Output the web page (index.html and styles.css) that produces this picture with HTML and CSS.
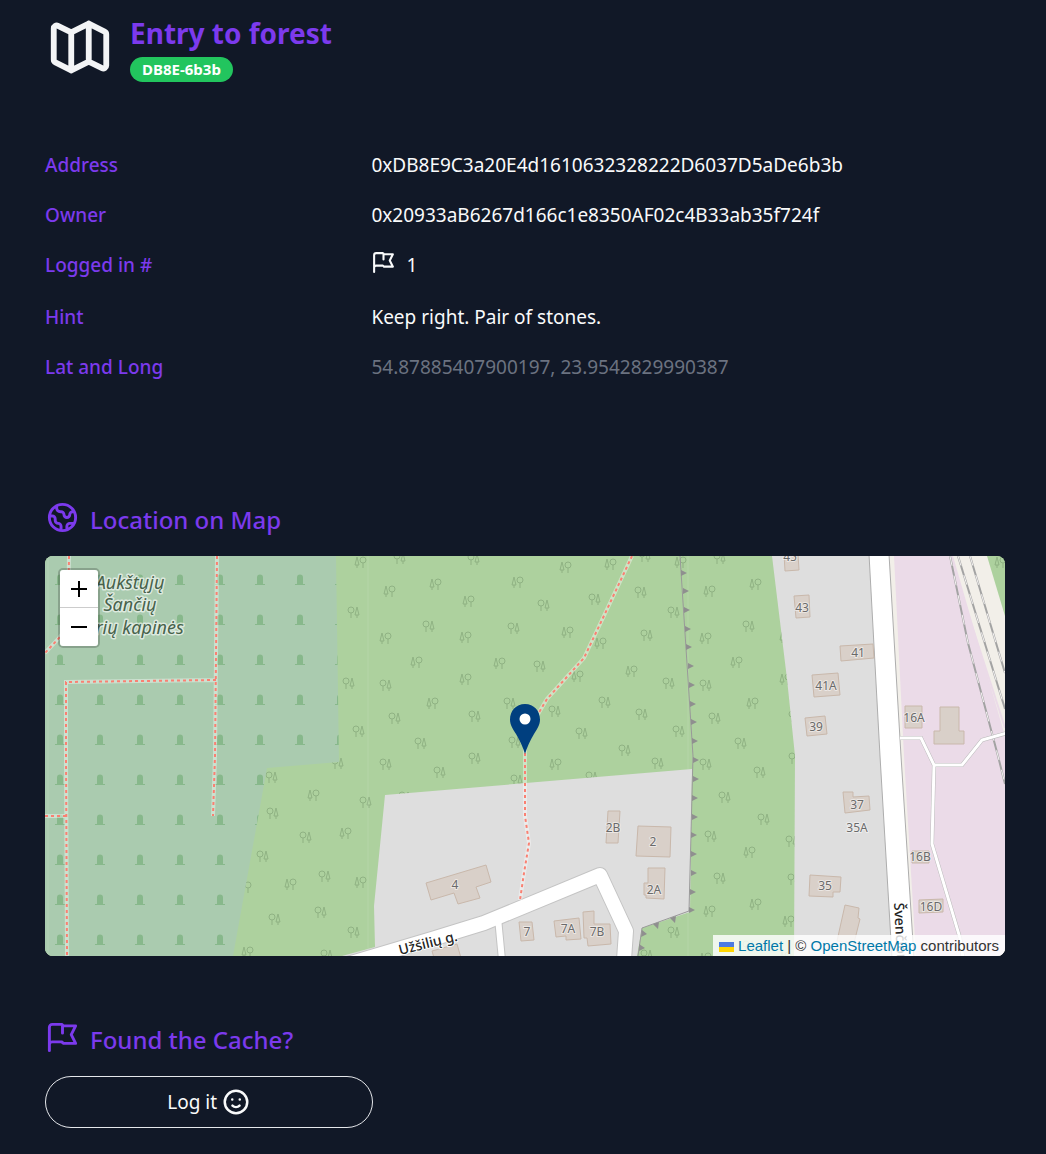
FILE: index.html
```html
<!DOCTYPE html>
<html lang="en">
<head>
<meta charset="utf-8">
<meta name="viewport" content="width=device-width, initial-scale=1">
<title>Entry to forest</title>
<link rel="stylesheet" href="styles.css">
</head>
<body>
<main class="page">
  <header class="cache-header">
    <svg class="icon icon-xl" viewBox="0 0 24 24" aria-hidden="true"><path d="M9 20l-5.447-2.724A1 1 0 013 16.382V5.618a1 1 0 011.447-.894L9 7m0 13l6-3m-6 3V7m6 10l4.553 2.276A1 1 0 0021 18.382V7.618a1 1 0 00-.553-.894L15 4m0 13V4m0 0L9 7"/></svg>
    <div class="cache-name">
      <h1>Entry to forest</h1>
      <span class="badge">DB8E-6b3b</span>
    </div>
  </header>

  <dl class="details">
    <div class="row"><dt>Address</dt><dd>0xDB8E9C3a20E4d1610632328222D6037D5aDe6b3b</dd></div>
    <div class="row"><dt>Owner</dt><dd>0x20933aB6267d166c1e8350AF02c4B33ab35f724f</dd></div>
    <div class="row row-logs"><dt>Logged in #</dt><dd><svg class="icon icon-sm" viewBox="0 0 24 24" aria-hidden="true"><path d="M3 21v-4m0 0V5a2 2 0 012-2h6.5l1 1H21l-3 6 3 6h-8.500l-1-1H5a2 2 0 00-2 2zm9-13.500V9"/></svg><span>1</span></dd></div>
    <div class="row"><dt>Hint</dt><dd>Keep right. Pair of stones.</dd></div>
    <div class="row"><dt>Lat and Long</dt><dd class="muted">54.87885407900197, 23.9542829990387</dd></div>
  </dl>

  <section class="location">
    <h2><svg class="icon icon-lg" viewBox="0 0 24 24" aria-hidden="true"><path d="M3.055 11H5a2 2 0 012 2v1a2 2 0 002 2 2 2 0 012 2v2.945M8 3.935V5.500A2.500 2.500 0 0010.500 8h.5a2 2 0 012 2 2 2 0 104 0 2 2 0 012-2h1.064M15 20.488V18a2 2 0 012-2h3.064M21 12a9 9 0 11-18 0 9 9 0 0118 0z"/></svg>Location on Map</h2>
    <div class="map">
      <svg class="map-canvas" viewBox="0 0 960 400" preserveAspectRatio="xMidYMid slice" role="img" aria-label="Map of the cache surroundings">
        <defs>
          <g id="pine"><path d="M-3 -5L-5 3H-1ZM-3 3V6"/><circle cx="3" cy="-2" r="3"/><path d="M3 1V6"/></g>
          <g id="oak"><circle cx="-3" cy="-2" r="3"/><path d="M-3 1V6M3 -5L1 3H5ZM3 3V6"/></g>
          <pattern id="wood" width="320" height="320" patternUnits="userSpaceOnUse">
            <rect width="320" height="320" fill="#add19e"/>
            <g class="tree">
              <use href="#pine" x="200" y="11"/><use href="#pine" x="245" y="8"/><use href="#pine" x="24" y="35"/><use href="#pine" x="70" y="28"/><use href="#pine" x="152" y="26"/><use href="#pine" x="103" y="45"/><use href="#pine" x="202" y="76"/><use href="#pine" x="20" y="82"/><use href="#pine" x="100" y="81"/><use href="#pine" x="235" y="87"/><use href="#pine" x="51" y="106"/><use href="#pine" x="134" y="107"/><use href="#pine" x="212" y="120"/><use href="#pine" x="266" y="115"/><use href="#pine" x="100" y="123"/><use href="#pine" x="67" y="147"/><use href="#pine" x="190" y="208"/><use href="#pine" x="268" y="239"/><use href="#pine" x="300" y="277"/><use href="#pine" x="315" y="6"/><use href="#pine" x="-5" y="6"/>
              <use href="#oak" x="35" y="2"/><use href="#oak" x="35" y="322"/><use href="#oak" x="109" y="3"/><use href="#oak" x="109" y="323"/><use href="#oak" x="280" y="0"/><use href="#oak" x="280" y="320"/><use href="#oak" x="179" y="49"/><use href="#oak" x="230" y="43"/><use href="#oak" x="276" y="36"/><use href="#oak" x="309" y="56"/><use href="#oak" x="64" y="70"/><use href="#oak" x="149" y="72"/><use href="#oak" x="282" y="79"/><use href="#oak" x="175" y="110"/><use href="#oak" x="21" y="129"/><use href="#oak" x="304" y="127"/><use href="#oak" x="145" y="147"/><use href="#oak" x="190" y="155"/><use href="#oak" x="240" y="146"/><use href="#oak" x="30" y="162"/><use href="#oak" x="110" y="160"/><use href="#oak" x="277" y="158"/><use href="#oak" x="56" y="187"/><use href="#oak" x="150" y="186"/><use href="#oak" x="217" y="177"/><use href="#oak" x="314" y="175"/><use href="#oak" x="260" y="194"/><use href="#oak" x="110" y="202"/><use href="#oak" x="21" y="208"/><use href="#oak" x="75" y="216"/><use href="#oak" x="293" y="207"/><use href="#oak" x="152" y="224"/><use href="#oak" x="227" y="221"/><use href="#oak" x="40" y="241"/><use href="#oak" x="228" y="257"/><use href="#oak" x="79" y="263"/><use href="#oak" x="1" y="246"/><use href="#oak" x="321" y="246"/><use href="#oak" x="26" y="280"/><use href="#oak" x="261" y="281"/><use href="#oak" x="107" y="285"/><use href="#oak" x="218" y="300"/><use href="#pine" x="64" y="296"/>
            </g>
          </pattern>
          <pattern id="graves" width="40" height="40" patternUnits="userSpaceOnUse">
            <rect width="40" height="40" fill="#aacbaf"/>
            <path fill="#87b88b" d="M12 28V21.500a3 3 0 016 0V28h2v1H10v-1z"/>
          </pattern>
        </defs>

        <rect width="960" height="400" fill="url(#wood)"/>
        <path fill="url(#graves)" d="M0 0H291L294 206L222 212L188 400H0Z"/>
        <path stroke="#fff" stroke-opacity=".12" d="M3 0V400M323 0V400M643 0V400"/>

        <g fill="#dedede">
          <path d="M340 239L647 213L645 356L597 372L592 400H297L330 391L329 350Z"/>
          <path d="M727 0L742 123L750 200L749 400H860L836 0Z"/>
        </g>
        <path fill="#f2efe9" d="M842 0H942L960 60V400H866Z"/>
        <path fill="#ebdbe8" d="M849 0H908L960 180V400H871L859 200Z"/>
        <path class="thin-strip" d="M911 20L960 172"/>

        <g class="fence">
          <path fill="none" d="M635 0L648 200L644 355L597 372L593 400"/>
          <path class="spikes" d="M636 14l6 3l-6 3zM638 32l6 3l-6 3zM639 51l6 3l-6 3zM640 70l6 3l-6 3zM641 88l6 3l-6 3zM643 107l6 3l-6 3zM644 126l6 3l-6 3zM645 145l6 3l-6 3zM646 163l6 3l-6 3zM647 182l6 3l-6 3zM648 201l6 3l-6 3zM648 220l6 3l-6 3zM647 239l6 3l-6 3zM647 258l6 3l-6 3zM646 276l6 3l-6 3zM646 295l6 3l-6 3zM646 314l6 3l-6 3zM645 333l6 3l-6 3zM644 351l6 3l-6 3zM625 362l5 5l1-7zM608 368l5 5l1-7zM597 374l5 4l-6 3zM594 388l6 4l-6 3z"/>
        </g>

        <g class="rail">
          <path d="M905 0L923 87L953 200L960 228"/><path d="M913 0L960 153"/><path d="M925 0L960 117"/>
        </g>
        <g class="rail-gap">
          <path d="M905 0L923 87L953 200L960 228"/><path d="M913 0L960 153"/><path d="M925 0L960 117"/>
        </g>

        <path class="street-edge" d="M824 -2L835 200L847 402H869L856 200L844 -2Z"/>

        <g class="lane-edge"><path d="M855 182H876L889 209H917L937 184L962 177M889 209L887 288L915 382L918 402"/></g>
        <g class="lane"><path d="M855 182H876L889 209H917L937 184L962 177M889 209L887 288L915 382L918 402"/></g>

        <g class="road-edge">
          <path stroke-width="16" d="M296 410L387 383L439 367L555 319L581 375L579 404"/>
          <path stroke-width="8" d="M453 362L457 404"/>
        </g>
        <g class="road">
          <path stroke-width="14" d="M296 410L387 383L439 367L555 319L581 375L579 404"/>
          <path stroke-width="6" d="M453 362L457 404"/>
        </g>

        <g class="trail-bed">
          <path d="M24 0L23 70L14 82L0 97M172 0L170 200L168 260M171 124L21 126V200L22 400M0 260H21"/>
          <path d="M587 0L565 47L539 102L502 143L480 180V260L484 287L479 317L475 344"/>
        </g>
        <g class="trail">
          <path d="M24 0L23 70L14 82L0 97M172 0L170 200L168 260M171 124L21 126V200L22 400M0 260H21"/>
          <path d="M587 0L565 47L539 102L502 143L480 180V260L484 287L479 317L475 344"/>
        </g>

        <g class="building">
          <path d="M381 327L441 309L446 326L431 331L435 342L413 348L409 337L386 344Z"/>
          <path d="M474 366H487L489 384L476 385Z"/>
          <path d="M509 365L534 362L536 383L521 384V380L511 381Z"/>
          <path d="M538 356L549 355V368H565L566 388L543 390L542 382H539Z"/>
          <path d="M563 255H575L573 287H561Z"/>
          <path d="M593 270L626 271L625 301L591 300Z"/>
          <path d="M603 312H620L619 343L601 342V339H599V327H603Z"/>
          <path d="M387 395L412 388L416 402H389Z"/>
          <path d="M739 -2H753L754 14L740 15Z"/>
          <path d="M749 40L764 39L765 61L751 62Z"/>
          <path d="M795 90L828 88L829 102L796 105Z"/>
          <path d="M767 119L793 117L795 139L769 141Z"/>
          <path d="M760 162L780 160L782 178L762 180Z"/>
          <path d="M860 150H877V172H860Z"/>
          <path d="M895 151H914V175H919V188H889V175H895Z"/>
          <path d="M798 236H808V241L824 240L825 254L800 257Z"/>
          <path d="M765 319L796 321L795 336H788V341L764 340Z"/>
          <path d="M800 349L814 352L813 362L815 363L809 387L792 385Z"/>
          <path d="M867 295H884V307H867Z"/>
          <path d="M874 344L898 343V356L874 357Z"/>
        </g>

        <g class="house-number">
          <text x="410" y="333">4</text><text x="482" y="380">7</text><text x="523" y="377">7A</text><text x="552" y="380">7B</text>
          <text x="568" y="276">2B</text><text x="608" y="290">2</text><text x="609" y="338">2A</text>
          <text x="745" y="5">45</text><text x="757" y="56">43</text><text x="813" y="101">41</text><text x="781" y="134">41A</text><text x="771" y="175">39</text>
          <text x="869" y="166">16A</text><text x="812" y="253">37</text><text x="812" y="276">35A</text><text x="780" y="334">35</text><text x="875" y="305">16B</text><text x="886" y="355">16D</text>
        </g>
        <g class="place-name">
          <text x="85" y="33">Aukštųjų</text><text x="85" y="55">Šančių</text><text x="85" y="78">karių kapinės</text>
        </g>
        <g class="street-name">
          <text transform="translate(355 399) rotate(-14)">Užšilių g.</text>
          <text transform="translate(849 347) rotate(87)">Švenčionių</text>
        </g>
      </svg>

      <svg class="marker" viewBox="0 0 32 52" aria-hidden="true"><path fill="#003f7f" d="M16 1C7 1 1 8 1 16.500C1 22 4 26 7 31C11 38 14 44 16 51C18 44 21 38 25 31C28 26 31 22 31 16.500C31 8 25 1 16 1Z"/><circle cx="16" cy="16" r="5.500" fill="#fff"/></svg>

      <div class="zoom">
        <button type="button" aria-label="Zoom in"><svg viewBox="0 0 16 16" aria-hidden="true"><path d="M0 8H16M8 0V16"/></svg></button>
        <button type="button" aria-label="Zoom out"><svg viewBox="0 0 16 16" aria-hidden="true"><path d="M0 8H16"/></svg></button>
      </div>
      <div class="attribution"><a href="#leaflet"><svg class="flag" viewBox="0 0 15 10" aria-hidden="true"><path fill="#4c7be1" d="M0 0h15v5H0z"/><path fill="#ffd500" d="M0 5h15v5H0z"/></svg>Leaflet</a> | © <a href="#osm">OpenStreetMap</a> contributors</div>
    </div>
  </section>

  <section class="found">
    <h2><svg class="icon icon-lg" viewBox="0 0 24 24" aria-hidden="true"><path d="M3 21v-4m0 0V5a2 2 0 012-2h6.500l1 1H21l-3 6 3 6h-8.500l-1-1H5a2 2 0 00-2 2zm9-13.500V9"/></svg>Found the Cache?</h2>
    <div class="actions">
      <button type="button" class="log-button">Log it<svg class="icon icon-md" viewBox="0 0 24 24" aria-hidden="true"><path d="M14.828 14.828a4 4 0 01-5.656 0M9 10h.01M15 10h.01M21 12a9 9 0 11-18 0 9 9 0 0118 0z"/></svg></button>
    </div>
  </section>
</main>
</body>
</html>
```
FILE: styles.css
```css
* { box-sizing: border-box; }
body {
  margin: 0;
  background: #111827;
  color: #f9fafb;
  font-family: "Noto Sans", "Open Sans", sans-serif;
  font-size: 19px;
  line-height: 30px;
}
h1, h2, dl, dd { margin: 0; }
.page { padding: 12px 41px 26px 45px; }

.icon {
  flex: none;
  fill: none;
  stroke: currentColor;
  stroke-width: 2;
  stroke-linecap: round;
  stroke-linejoin: round;
}
.icon-sm { width: 25px; height: 25px; }
.icon-md { width: 30px; height: 30px; }
.icon-lg { width: 35px; height: 35px; }
.icon-xl { width: 70px; height: 70px; color: #f3f4f6; }

.cache-header { display: flex; align-items: flex-start; gap: 15px; }
.cache-name { display: flex; flex-direction: column; align-items: flex-start; }
h1 {
  color: #7c3aed;
  font-size: 28px;
  font-weight: 700;
  line-height: 43px;
}
.badge {
  margin-top: 2px;
  padding: 0 12px;
  border-radius: 13px;
  background: #22c55e;
  color: #fff;
  font-size: 15px;
  font-weight: 700;
  line-height: 25px;
}

.details { margin-top: 58px; }
.row {
  display: grid;
  grid-template-columns: 17fr 33fr;
  padding: 10px 0;
}
.row-logs { padding-bottom: 12px; }
.row-logs dd { display: flex; gap: 10px; }
dt { color: #7c3aed; font-weight: 500; }
.muted { color: #6b7280; }

h2 {
  display: flex;
  align-items: flex-start;
  gap: 10px;
  color: #7c3aed;
  font-size: 24px;
  font-weight: 500;
  line-height: 40px;
}
.location { margin-top: 108px; }

.map {
  position: relative;
  height: 400px;
  margin-top: 16px;
  overflow: hidden;
  border-radius: 8px;
  background: #add19e;
}
.map-canvas { display: block; width: 100%; height: 100%; }
.tree { fill: none; stroke: #8fb283; stroke-width: 1; }
.thin-strip { fill: none; stroke: #ebdbe8; stroke-width: 2; }
.fence { stroke: #999; stroke-width: 1; }
.spikes { fill: #8f8f8f; stroke: none; }
.rail { fill: none; stroke: #a3a3a3; stroke-width: 2; }
.rail-gap { fill: none; stroke: #f4f2f2; stroke-width: 1; stroke-dasharray: 10 10; }
.street-edge { fill: #fff; stroke: #adadad; stroke-width: 1; }
.lane-edge { fill: none; stroke: #bbb; stroke-width: 4; }
.lane { fill: none; stroke: #fff; stroke-width: 3; }
.road-edge, .road { fill: none; stroke-linejoin: round; }
.road-edge { stroke: #c4c4c4; }
.road { stroke: #fff; }
.trail-bed { fill: none; stroke: #fff; stroke-opacity: .4; stroke-width: 4; }
.trail { fill: none; stroke: #fa8072; stroke-width: 2; stroke-dasharray: 3 3; }
.building { fill: #d9d0c9; stroke: #c9b8ab; stroke-width: 1; }
.house-number, .place-name { text-anchor: middle; }
.house-number text, .place-name text, .street-name text {
  paint-order: stroke;
  stroke-linejoin: round;
}
.house-number { fill: #6a6a6a; font-size: 12px; stroke: #fff; stroke-opacity: .5; stroke-width: 2; }
.place-name { fill: #47624b; font-size: 18px; font-style: italic; stroke: #fff; stroke-opacity: .6; stroke-width: 3; }
.street-name { fill: #222; font-size: 14px; font-weight: 500; stroke: #fff; stroke-width: 2; }

.marker {
  position: absolute;
  top: 50%;
  left: 50%;
  width: 32px;
  height: 52px;
  margin: -53px 0 0 -16px;
}
.zoom {
  position: absolute;
  top: 12px;
  left: 13px;
  display: flex;
  flex-direction: column;
  border: 2px solid rgba(0, 0, 0, .2);
  border-radius: 5px;
  background-clip: padding-box;
}
.zoom button {
  display: grid;
  place-items: center;
  width: 38px;
  height: 38px;
  padding: 0;
  border: 0;
  border-radius: 0 0 3px 3px;
  background: #fff;
}
.zoom button:first-child { border-bottom: 1px solid #ccc; border-radius: 3px 3px 0 0; }
.zoom svg { width: 16px; height: 16px; stroke: #000; stroke-width: 2; }
.attribution {
  position: absolute;
  right: 0;
  bottom: 0;
  padding: 0 6px;
  background: rgba(255, 255, 255, .8);
  color: #333;
  font-family: "Liberation Sans", Arial, sans-serif;
  font-size: 15px;
  line-height: 21px;
}
.attribution a { color: #0078a8; text-decoration: none; }
.flag { width: 15px; height: 10px; margin-right: 4px; vertical-align: -1px; }

.found { margin-top: 64px; }
.actions { display: grid; grid-template-columns: 13fr 25fr; margin-top: 16px; }
.log-button {
  display: flex;
  align-items: center;
  justify-content: center;
  gap: 4px;
  height: 52px;
  border: 1px solid #e5e7eb;
  border-radius: 26px;
  background: transparent;
  color: #f9fafb;
  font: inherit;
}
```
